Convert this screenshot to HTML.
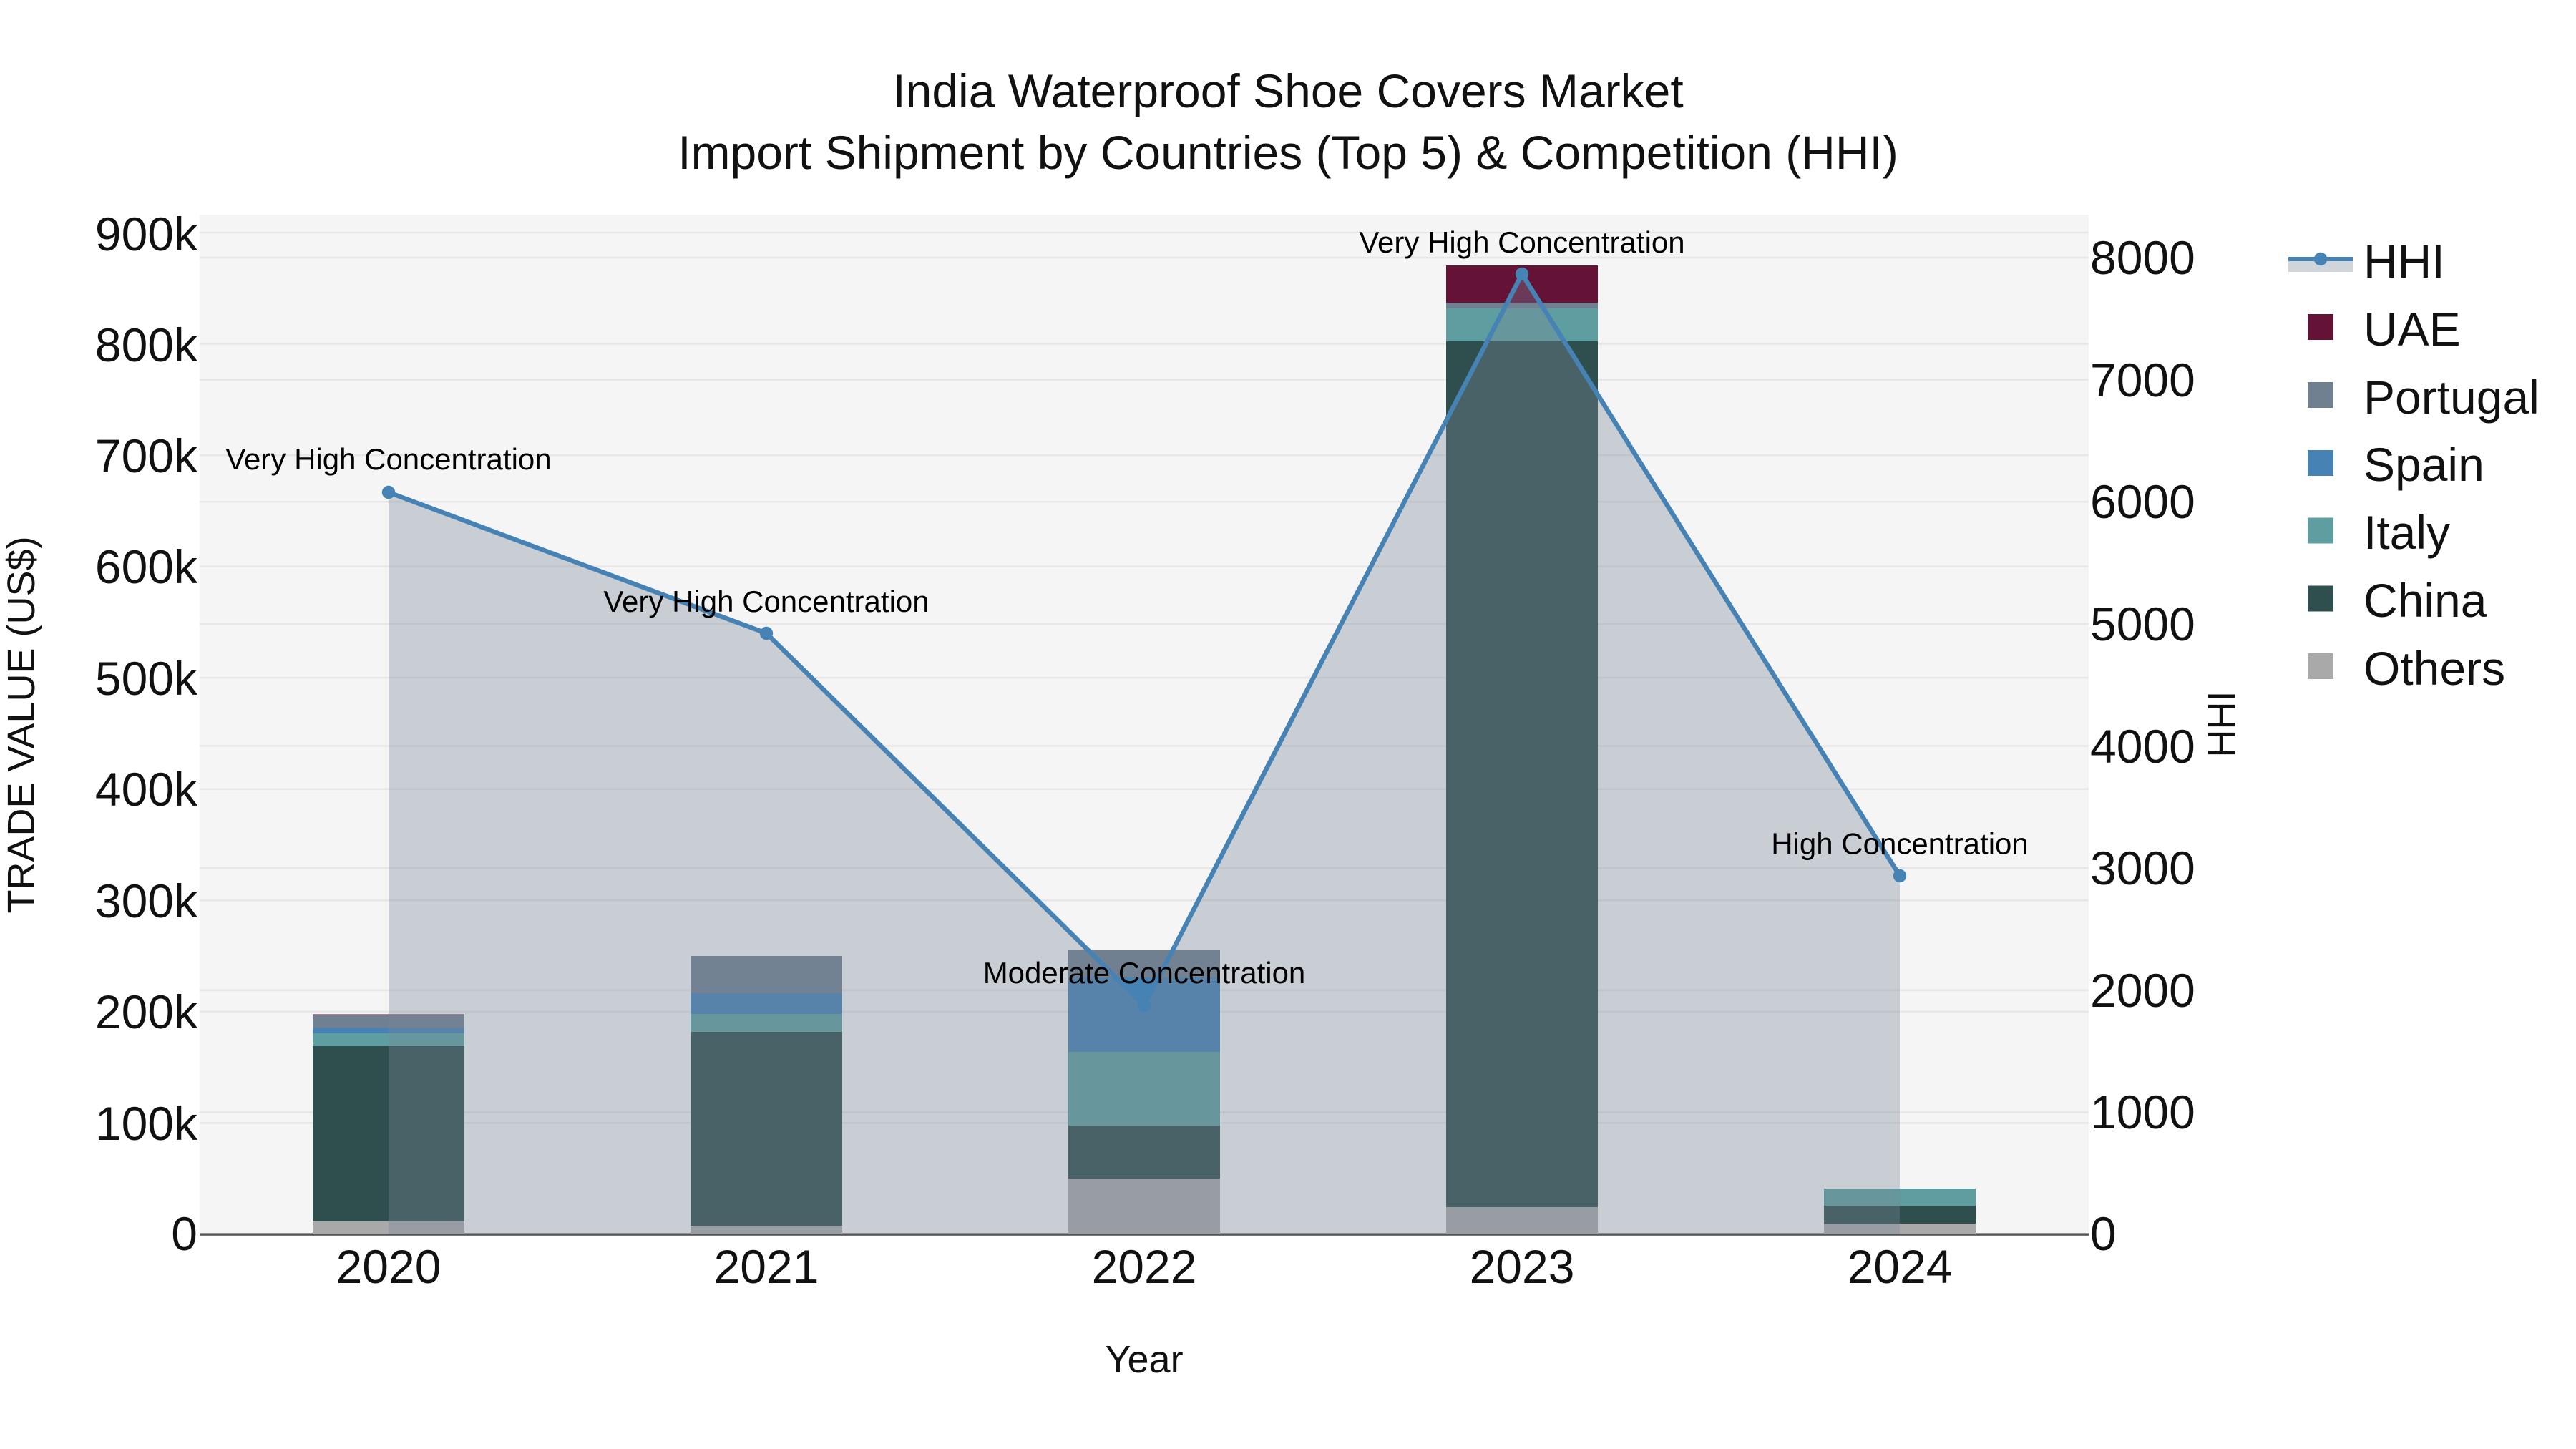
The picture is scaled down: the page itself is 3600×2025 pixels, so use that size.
<!DOCTYPE html>
<html><head><meta charset="utf-8"><style>
html,body{margin:0;padding:0;background:#fff;width:3600px;height:2025px;overflow:hidden}
svg{display:block;font-family:"Liberation Sans",Arial,sans-serif}
.g{stroke:#e7e7e7;stroke-width:2.6}
.t{font-size:66px;fill:#111}
.a{font-size:42px;fill:#000;text-anchor:middle}
.l{font-size:66px;fill:#111}
</style></head><body>
<svg width="3600" height="2025" viewBox="0 0 3600 2025" xmlns="http://www.w3.org/2000/svg">
<rect width="3600" height="2025" fill="#fff"/>
<rect x="279" y="300" width="2640" height="1425" fill="#f5f5f5"/>
<g class="g">
<path d="M279 325H2919M279 480.6H2919M279 636.1H2919M279 791.7H2919M279 947.2H2919M279 1102.8H2919M279 1258.3H2919M279 1413.9H2919M279 1569.4H2919"/>
<path d="M279 360H2919M279 530.6H2919M279 701.3H2919M279 871.9H2919M279 1042.5H2919M279 1213.1H2919M279 1383.8H2919M279 1554.4H2919"/>
</g>
<rect x="279" y="1723.4" width="2640" height="3.4" fill="#555"/>
<!-- bars -->
<g>
<rect x="437" y="1707" width="212" height="18" fill="#a9a9a9"/>
<rect x="437" y="1462" width="212" height="245" fill="#2f4f4f"/>
<rect x="437" y="1444" width="212" height="18" fill="#5f9ea0"/>
<rect x="437" y="1436.5" width="212" height="7.5" fill="#4682b4"/>
<rect x="437" y="1418.5" width="212" height="18" fill="#708090"/>
<rect x="437" y="1417.5" width="212" height="1" fill="#641236"/>

<rect x="965" y="1713" width="212" height="12" fill="#a9a9a9"/>
<rect x="965" y="1442" width="212" height="271" fill="#2f4f4f"/>
<rect x="965" y="1417" width="212" height="25" fill="#5f9ea0"/>
<rect x="965" y="1388" width="212" height="29" fill="#4682b4"/>
<rect x="965" y="1336" width="212" height="52" fill="#708090"/>

<rect x="1493" y="1647" width="212" height="78" fill="#a9a9a9"/>
<rect x="1493" y="1573" width="212" height="74" fill="#2f4f4f"/>
<rect x="1493" y="1470" width="212" height="103" fill="#5f9ea0"/>
<rect x="1493" y="1366" width="212" height="104" fill="#4682b4"/>
<rect x="1493" y="1328" width="212" height="38" fill="#708090"/>

<rect x="2021" y="1687" width="212" height="38" fill="#a9a9a9"/>
<rect x="2021" y="477" width="212" height="1210" fill="#2f4f4f"/>
<rect x="2021" y="431" width="212" height="46" fill="#5f9ea0"/>
<rect x="2021" y="423" width="212" height="8" fill="#708090"/>
<rect x="2021" y="371" width="212" height="52" fill="#641236"/>

<rect x="2549" y="1710" width="212" height="15" fill="#a9a9a9"/>
<rect x="2549" y="1685" width="212" height="25" fill="#2f4f4f"/>
<rect x="2549" y="1661" width="212" height="24" fill="#5f9ea0"/>
</g>
<!-- area + line -->
<polygon points="543,688 1071,885 1599,1405 2127,383 2655,1224 2655,1725 543,1725" fill="#788798" fill-opacity="0.35"/>
<polyline points="543,688 1071,885 1599,1405 2127,383 2655,1224" fill="none" stroke="#4682b4" stroke-width="6.5"/>
<g fill="#4682b4">
<circle cx="543" cy="688" r="9.2"/><circle cx="1071" cy="885" r="9.2"/><circle cx="1599" cy="1405" r="9.2"/><circle cx="2127" cy="383" r="9.2"/><circle cx="2655" cy="1224" r="9.2"/>
</g>
<!-- annotations -->
<text class="a" x="543" y="656">Very High Concentration</text>
<text class="a" x="1071" y="855">Very High Concentration</text>
<text class="a" x="1599" y="1374">Moderate Concentration</text>
<text class="a" x="2127" y="353">Very High Concentration</text>
<text class="a" x="2655" y="1193.5">High Concentration</text>
<!-- title -->
<text x="1800" y="150" text-anchor="middle" font-size="66" fill="#111">India Waterproof Shoe Covers Market</text>
<text x="1800" y="236" text-anchor="middle" font-size="66" fill="#111">Import Shipment by Countries (Top 5) &amp; Competition (HHI)</text>
<!-- left ticks -->
<g class="t" text-anchor="end">
<text x="276" y="350">900k</text>
<text x="276" y="505">800k</text>
<text x="276" y="660">700k</text>
<text x="276" y="815">600k</text>
<text x="276" y="971">500k</text>
<text x="276" y="1126">400k</text>
<text x="276" y="1282">300k</text>
<text x="276" y="1437">200k</text>
<text x="276" y="1593">100k</text>
<text x="276" y="1747">0</text>
</g>
<!-- right ticks -->
<g class="t">
<text x="2921" y="383">8000</text>
<text x="2921" y="554">7000</text>
<text x="2921" y="724">6000</text>
<text x="2921" y="895">5000</text>
<text x="2921" y="1066">4000</text>
<text x="2921" y="1236">3000</text>
<text x="2921" y="1407">2000</text>
<text x="2921" y="1577">1000</text>
<text x="2921" y="1747">0</text>
</g>
<!-- x ticks -->
<g class="t" text-anchor="middle">
<text x="543" y="1793">2020</text>
<text x="1071" y="1793">2021</text>
<text x="1599" y="1793">2022</text>
<text x="2127" y="1793">2023</text>
<text x="2655" y="1793">2024</text>
</g>
<!-- axis titles -->
<text x="1599" y="1918" text-anchor="middle" font-size="54" fill="#111">Year</text>
<text transform="translate(48 1013) rotate(-90)" text-anchor="middle" font-size="54" fill="#111">TRADE VALUE (US$)</text>
<text transform="translate(3123 1012) rotate(-90)" text-anchor="middle" font-size="54" fill="#111">HHI</text>
<!-- legend -->
<rect x="3198" y="362" width="90" height="18" fill="#788798" fill-opacity="0.35"/>
<rect x="3198" y="359" width="90" height="6" fill="#4682b4"/>
<circle cx="3243" cy="362" r="9.2" fill="#4682b4"/>
<rect x="3225" y="439" width="36" height="36" fill="#641236"/>
<rect x="3225" y="534" width="36" height="36" fill="#708090"/>
<rect x="3225" y="629" width="36" height="36" fill="#4682b4"/>
<rect x="3225" y="723.5" width="36" height="36" fill="#5f9ea0"/>
<rect x="3225" y="818.5" width="36" height="36" fill="#2f4f4f"/>
<rect x="3225" y="913" width="36" height="36" fill="#a9a9a9"/>
<g class="l">
<text x="3303" y="388">HHI</text>
<text x="3303" y="483">UAE</text>
<text x="3303" y="578">Portugal</text>
<text x="3303" y="672">Spain</text>
<text x="3303" y="767">Italy</text>
<text x="3303" y="862">China</text>
<text x="3303" y="957">Others</text>
</g>
</svg>
</body></html>
